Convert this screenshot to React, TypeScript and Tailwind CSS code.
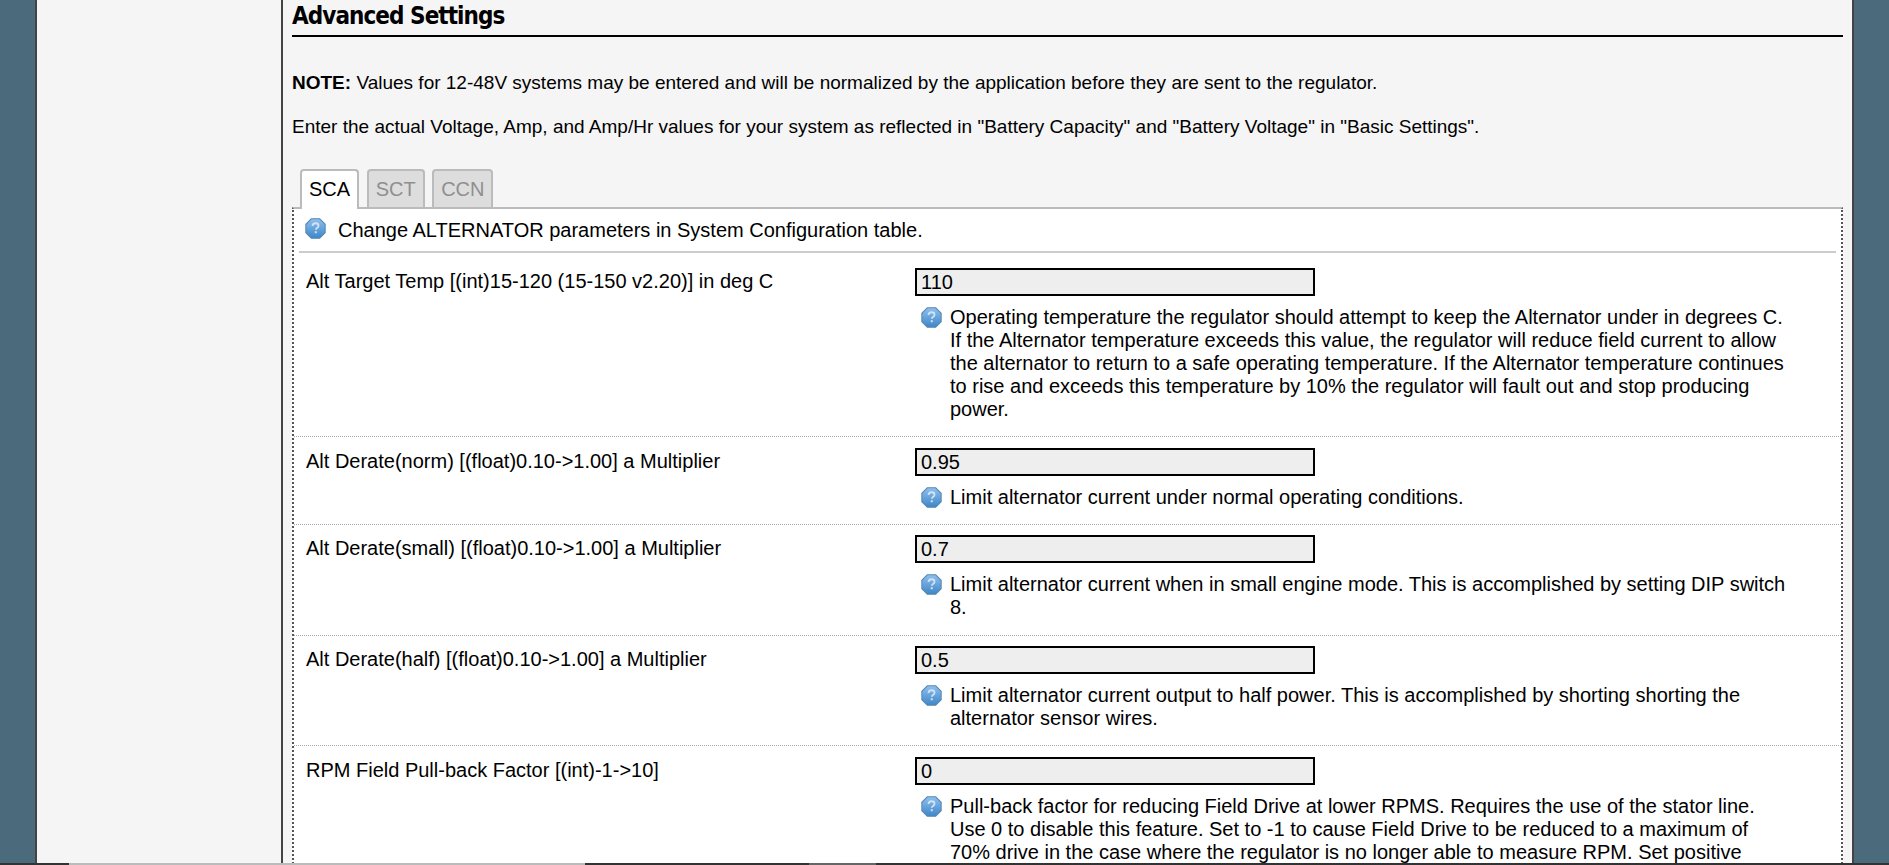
const rows = [
  {
    label: "Alt Target Temp [(int)15-120 (15-150 v2.20)] in deg C",
    value: "110",
    pad: "pt-[15px] pb-[15px] border-b-[1px]",
    help: "Operating temperature the regulator should attempt to keep the Alternator under in degrees C. If the Alternator temperature exceeds this value, the regulator will reduce field current to allow the alternator to return to a safe operating temperature. If the Alternator temperature continues to rise and exceeds this temperature by 10% the regulator will fault out and stop producing power.",
  },
  {
    label: "Alt Derate(norm) [(float)0.10->1.00] a Multiplier",
    value: "0.95",
    pad: "pt-[11px] pb-[15px] border-b-[1px]",
    help: "Limit alternator current under normal operating conditions.",
  },
  {
    label: "Alt Derate(small) [(float)0.10->1.00] a Multiplier",
    value: "0.7",
    pad: "pt-[10px] pb-[16px] border-b-[1px]",
    help: "Limit alternator current when in small engine mode. This is accomplished by setting DIP switch 8.",
  },
  {
    label: "Alt Derate(half) [(float)0.10->1.00] a Multiplier",
    value: "0.5",
    pad: "pt-[10px] pb-[15px] border-b-[1px]",
    help: "Limit alternator current output to half power. This is accomplished by shorting shorting the alternator sensor wires.",
  },
  {
    label: "RPM Field Pull-back Factor [(int)-1->10]",
    value: "0",
    pad: "pt-[11px]",
    help: "Pull-back factor for reducing Field Drive at lower RPMS. Requires the use of the stator line. Use 0 to disable this feature. Set to -1 to cause Field Drive to be reduced to a maximum of 70% drive in the case where the regulator is no longer able to measure RPM. Set positive",
  },
];

const HelpIcon = () => (
  <svg width="21" height="21" viewBox="0 0 20 20" className="shrink-0">
    <defs>
      <linearGradient id="helpFill" x1="0" y1="0" x2="0" y2="1">
        <stop offset="0" stopColor="#8fc0ee" />
        <stop offset="1" stopColor="#3f86c8" />
      </linearGradient>
    </defs>
    <path
      d="M6 .8h8L19.2 6v8L14 19.2H6L.8 14V6z"
      fill="url(#helpFill)"
      stroke="#5a89b2"
      strokeWidth="1"
    />
    <path
      d="M7.2 7.6c0-1.7 1.2-2.6 2.9-2.6s2.8.9 2.8 2.3c0 1.2-.7 1.7-1.5 2.2-.7.5-1.1.8-1.1 1.6"
      fill="none"
      stroke="#cfe3f5"
      strokeWidth="1.7"
    />
    <rect x="9.3" y="12.6" width="1.9" height="1.9" fill="#cfe3f5" />
  </svg>
);

const Tab = ({ name, active }: { name: string; active?: boolean }) => (
  <div
    className={
      active
        ? "h-[40px] -mb-[2px] z-10 px-[7px] pt-[7px] leading-[23px] border-2 border-b-0 border-[#bbbbbb] rounded-t-[4px] bg-white text-black"
        : "h-[38px] px-[7px] pt-[7px] leading-[23px] border-2 border-[#bbbbbb] border-b-0 rounded-t-[4px] bg-[#dddddd] text-[#8f8f8f]"
    }
  >
    {name}
  </div>
);

const SettingRow = ({
  label,
  value,
  help,
  pad,
}: {
  label: string;
  value: string;
  help: string;
  pad: string;
}) => (
  <div className={"flex pl-[12px] border-dotted border-[#aaaaaa] " + pad}>
    <div className="w-[609px] shrink-0 leading-[23px] pt-[2px]">{label}</div>
    <div>
      <div className="w-[400px] h-[28px] border-2 border-black bg-[#eeeeee] px-[4px] leading-[24px]">
        {value}
      </div>
      <div className="flex mt-[10px] pl-[6px] gap-[8px]">
        <div className="pt-[1px]">
          <HelpIcon />
        </div>
        <div className="w-[838px] leading-[23px]">{help}</div>
      </div>
    </div>
  </div>
);

export default function App() {
  return (
    <div className="relative h-[865px] overflow-hidden bg-[#4b6a7b] font-['Liberation_Sans',Arial,sans-serif] text-[20px] text-black">
      <div className="flex h-full mx-[35px] border-x-2 border-[#444444] bg-[#f5f5f5]">
        <div className="w-[246px] shrink-0 border-r-2 border-[#444444]" />
        <div className="flex-1 pl-[9px] pr-[9px]">
          <h2 className="h-[37px] border-b-[2px] border-black font-['DejaVu_Sans_Condensed','DejaVu_Sans',sans-serif] font-bold text-[24px] tracking-[-0.95px] leading-[33px]">
            Advanced Settings
          </h2>
          <p className="mt-[34px] text-[19px] leading-[23px]">
            <b>NOTE:</b> Values for 12-48V systems may be entered and will be normalized by the application before they are sent to the regulator.
          </p>
          <p className="mt-[21px] text-[19px] leading-[23px]">
            Enter the actual Voltage, Amp, and Amp/Hr values for your system as reflected in "Battery Capacity" and "Battery Voltage" in "Basic Settings".
          </p>
          <div className="flex gap-[7.5px] mt-[31px] pl-[8px] items-end">
            <Tab name="SCA" active />
            <Tab name="SCT" />
            <Tab name="CCN" />
          </div>
          <div className="border-t-2 border-[#bbbbbb] bg-white border-x-2 border-x-[#555555] border-dotted [border-top-style:solid] h-[700px]">
            <div className="mx-[5px] h-[44px] flex items-start border-b-2 border-[#cccccc] pl-[6px] pt-[9px] gap-[12px]">
              <HelpIcon />
              <span className="leading-[23px] pt-[1px]">Change ALTERNATOR parameters in System Configuration table.</span>
            </div>
            {rows.map((row) => (
              <SettingRow key={row.label} {...row} />
            ))}
          </div>
        </div>
      </div>
      {/* window taskbar strip along the bottom edge */}
      <div className="absolute left-0 right-0 bottom-0 h-[2px] flex bg-[#333333]">
        <div className="w-[69px]" />
        <div className="w-[516px] bg-[#bbbbbb]" />
        <div className="w-[224px]" />
        <div className="w-[67px] bg-[#666666]" />
      </div>
    </div>
  );
}
